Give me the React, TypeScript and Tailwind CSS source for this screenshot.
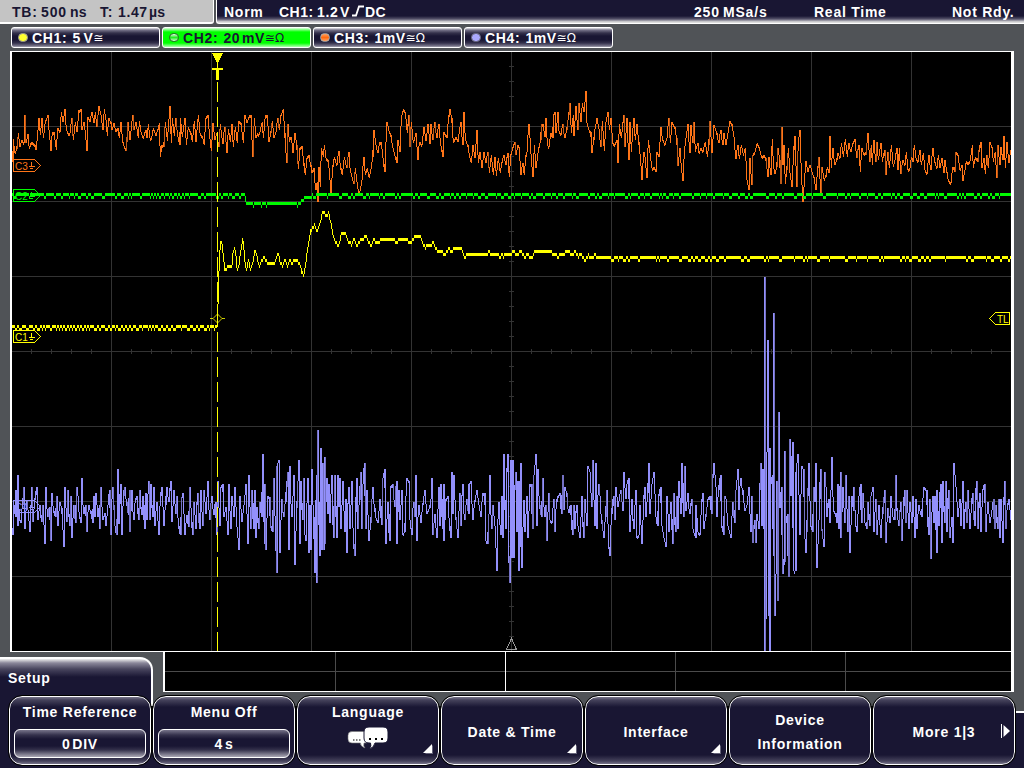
import React from "react";

type Section = { ox: number; oy: number; pts: string };
type Pt = [number, number];

// Trace sections are stored in thirds of a pixel relative to their origin.
const CH3: Section[] = [
  { ox: 0, oy: 90, pts: "38,215 40,148 44,190 50,178 55,130 60,170 66,150 72,160 74,75 78,160 84,132 88,178 94,155 104,165 108,180 112,145 117,85 121,135 126,84 130,145 136,95 144,75 147,120 153,182 157,125 162,125 169,180 173,115 180,125 184,66 189,95 195,58 199,120 205,130 210,128 215,84 220,150 226,95 231,125 237,60 243,58 246,120 252,95 256,130 261,182 264,80 270,95 275,66 282,100 286,66 290,110 297,48 303,75 309,120 313,58 318,90 322,137 326,85 332,95 336,120 342,100 347,125 354,113 358,145 363,95 368,155 377,182 380,155 384,95 390,150 398,75 402,120 408,95 415,145 418,93 424,132 430,145 437,120 441,145 445,103 450,145 454,150 460,113 468,138 473,120 478,100 481,200 486,165 491,170 496,95 502,152 510,48 514,160 517,84 523,138 527,84 532,130 539,165 541,84 547,140 555,85 559,165 565,110 572,130 577,155 583,93 588,155 595,75 600,130 607,140 613,165 617,84 624,76 628,130 634,182 639,100 645,150 650,130 656,170 661,103 668,162 674,110 681,190 685,118 691,155 696,103 700,172 706,110 712,160 716,93 723,100 730,160 735,76 741,100 749,75" },
  { ox: 250, oy: 90, pts: "3,75 8,200 13,85 18,145 22,130 28,135 33,110 37,95 40,145 46,76 52,75 57,155 62,130 67,93 72,145 78,125 83,84 88,120 93,76 100,58 104,130 110,218 114,103 118,155 124,140 129,190 135,130 140,165 145,236 150,175 156,167 161,220 166,255 171,205 176,195 182,225 186,250 191,235 197,300 202,275 204,335 207,230 211,290 214,175 220,200 223,165 228,205 235,210 240,270 243,312 248,230 253,200 260,225 266,184 272,235 277,255 283,200 290,235 296,185 300,235 306,260 311,283 316,235 321,275 326,310 331,300 336,270 341,200 346,255 352,235 358,265 364,230 368,200 372,121 378,165 383,190 389,155 394,158 400,215 404,245 408,155 411,95 417,122 422,135 427,165 433,190 440,218 444,150 450,185 454,84 460,58 466,66 472,130 476,75 479,172 484,95 490,160 498,130 504,210 508,155 516,165 522,112 528,152 534,103 540,163 543,103 548,150 554,95 560,145 566,102 571,155 578,200 582,125 590,145 596,80 600,58 605,84 610,160 618,140 624,155 632,95 638,165 642,66 646,150 653,165 660,205 664,218 669,165 675,205 681,120 685,220 690,185 696,235 702,185 708,220 713,185 718,248 724,195 730,255 735,200 739,258 745,205 751,250 755,218 762,194 767,225 773,190 778,262" },
  { ox: 510, oy: 90, pts: "2,195 8,175 14,155 18,195 24,165 28,172 32,255 38,220 43,255 47,200 51,185 56,103 61,155 64,210 69,262 73,165 78,235 82,205 86,175 92,150 94,103 100,103 104,140 108,84 112,165 117,172 122,130 128,145 130,75 135,66 138,130 144,66 147,122 152,135 158,103 164,145 170,120 176,75 180,40 184,128 190,75 192,138 198,48 203,120 207,40 213,95 217,40 222,66 228,3 231,100 236,120 242,125 246,190 251,150 255,118 261,85 267,118 272,172 277,93 283,182 288,95 294,66 298,120 303,85 308,160 314,165 321,150 324,218 328,103 334,145 341,76 345,170 351,85 356,210 360,95 364,185 371,84 376,150 381,103 386,155 391,200 396,270 401,185 406,205 410,263 415,150 420,190 426,235 432,230 438,245 441,185 448,200 452,112 458,150 464,165 471,145 476,84 481,160 486,95 494,112 500,145 504,228 510,175 514,235 519,272 523,185 529,135 534,103 539,190 543,105 548,160 552,95 556,185 563,160 567,190 573,175 579,185 586,155 592,200 596,165 600,94 606,190 612,104 620,130 626,160 632,120 638,165 642,130 648,165 654,130 660,94 666,103 672,140 677,208 683,165 688,208 694,165 700,195 706,175 711,270 717,300 720,205 725,285 729,195 735,185 742,158 748,175 755,205 761,195" },
  { ox: 764, oy: 90, pts: "0,195 5,205 12,262 15,200 20,255 25,148 28,225 33,252 38,230 42,175 47,210 50,282 54,112 57,225 60,165 64,282 68,240 73,175 78,250 84,290 89,180 93,138 98,290 103,155 108,121 112,250 117,335 121,275 126,212 131,245 138,225 144,245 150,262 156,300 161,235 165,202 170,308 174,230 180,268 185,262 190,230 195,250 198,138 202,235 206,175 212,225 218,210 222,190 228,205 232,158 238,200 244,148 250,200 254,158 260,185 267,160 273,148 278,205 284,165 289,245 293,175 299,190 305,195 312,130 317,215 322,165 325,225 329,150 335,215 338,155 343,210 351,158 355,215 362,180 366,255 371,185 376,235 382,165 388,232 393,210 398,175 402,240 406,175 410,252 416,210 423,225 427,185 432,240 438,235 442,200 446,215 451,165 456,205 462,215 467,180 472,225 478,190 483,240 489,252 494,195 500,240 506,175 512,215 518,235 523,195 528,235 534,205 540,250 543,210 548,245 553,272 561,280 566,230 572,245 576,185 582,195 588,240 594,225 597,272 603,240 607,212 613,220 619,210 625,165 628,235 634,200 641,215 644,185 650,155 654,235 660,205 664,252 668,195 673,235 678,156 684,172 688,215 694,185 698,263 702,165 707,225 711,170 716,210 720,138 724,235 729,155 734,218 741,180" },
];

const CH4: Section[] = [
  { ox: 0, oy: 420, pts: "38,345 42,255 46,290 48,210 52,318 54,165 58,300 63,308 67,255 72,201 75,326 80,240 84,270 90,335 95,201 99,305 104,240 110,201 114,300 119,255 124,305 129,255 135,372 138,201 142,290 148,260 153,362 156,219 160,272 166,290 171,228 174,318 179,245 185,265 192,380 195,201 200,305 204,210 208,318 213,228 216,353 221,255 226,308 230,201 234,228 238,290 243,308 246,174 250,282 256,255 261,335 265,255 271,272 278,308 280,228 285,290 288,219 294,290 298,255 300,326 303,201 308,300 314,280 318,318 324,255 328,210 333,345 337,201 341,255 346,335 350,345 354,147 357,312 361,192 366,345 370,228 373,201 379,245 385,285 388,210 390,335 396,210 400,300 406,240 411,228 415,300 420,210 424,285 429,228 433,326 436,219 440,300 446,182 449,300 453,192 457,290 462,201 465,318 470,245 477,345 481,228 486,201 492,318 496,255 500,201 506,245 512,182 516,305 522,210 527,282 531,228 535,318 541,345 545,235 549,219 555,345 560,285 565,320 570,201 577,345 582,245 588,326 592,219 598,326 603,210 608,318 612,210 618,282 624,182 628,300 635,228 641,285 646,245 650,345 654,182 659,318 663,201 668,192 672,290 678,260 684,345 687,192 692,326 696,228 702,290 705,201 711,320 717,390 720,228 726,305 732,255 738,192 744,372 747,165" },
  { ox: 250, oy: 420, pts: "2,326 6,210 10,326 13,210 18,353 21,262 25,326 30,245 34,290 39,102 43,372 45,192 48,390 53,228 58,230 61,318 67,335 72,175 76,326 80,460 81,138 87,120 90,398 95,237 100,290 106,245 109,201 114,156 117,390 120,138 124,290 129,228 132,165 135,435 140,265 147,121 150,372 153,183 157,300 162,174 165,345 168,362 173,174 176,398 180,255 183,390 186,147 190,290 195,460 199,165 201,488 204,30 208,408 212,84 214,390 217,130 220,390 224,112 225,372 229,174 232,282 237,192 240,308 245,165 250,353 254,165 260,353 262,165 267,262 270,174 273,326 279,183 284,335 288,237 291,398 295,201 300,326 306,183 310,372 315,408 319,174 322,326 328,240 332,156 334,326 339,192 343,130 347,326 351,210 357,362 362,310 368,201 373,265 379,300 384,308 390,237 394,315 399,174 404,147 408,372 413,245 418,362 422,201 428,192 434,262 439,183 441,372 446,210 450,300 456,210 459,345 464,335 468,228 471,174 477,183 480,300 485,345 490,245 495,290 498,165 500,362 506,255 513,308 518,255 525,210 530,282 538,265 543,237 546,174 548,345 555,282 560,353 567,201 570,318 573,192 577,326 580,192 582,362 588,237 594,228 598,318 603,353 606,156 609,282 612,165 617,290 624,353 629,219 633,318 637,192 643,300 650,237 655,282 657,192 663,183 668,300 674,245 681,210 687,255 693,290 698,219 704,219 708,362 712,372 717,282 720,165 724,326 729,255 735,318 741,452 745,245" },
  { ox: 500, oy: 420, pts: "2,345 6,228 9,353 12,102 16,326 20,156 24,102 26,408 30,488 32,120 36,415 38,120 41,415 44,210 48,156 51,335 54,183 57,452 60,183 61,380 63,130 66,443 71,240 75,335 81,228 84,353 90,192 94,192 97,326 102,165 108,102 110,318 114,147 118,255 124,290 129,174 133,290 137,255 141,362 146,219 150,300 156,308 161,237 165,335 169,245 174,228 180,219 184,282 188,165 190,270 194,201 200,219 205,280 211,255 217,345 221,255 225,326 229,255 234,318 240,353 246,228 250,353 255,237 261,318 264,138 270,156 275,262 279,120 284,318 288,130 291,326 295,192 300,228 304,300 312,353 316,290 321,210 326,380 330,408 334,282 340,228 345,300 348,201 354,262 362,210 369,272 372,156 377,237 381,192 385,174 390,335 396,237 400,326 408,210 410,353 417,345 420,255 426,372 433,201 438,290 443,219 446,130 450,282 456,192 462,156 468,290 472,318 476,228 481,201 486,318 492,353 498,380 501,228 507,335 512,245 518,372 520,219 526,335 531,228 534,326 537,183 543,282 546,130 550,290 553,138 558,272 564,219 568,282 575,237 579,326 586,353 588,255 594,335 600,345 605,245 609,219 612,326 617,290 624,237 629,228 634,282 638,174 642,130 648,201 651,290 655,210 661,165 665,318 671,345 673,228 678,237 684,318 693,353 698,245 703,308 708,210 714,147 717,270 721,174 727,210 735,272 741,255 747,201" },
  { ox: 750, oy: 260, pts: "2,815 5,708 8,850 13,780 18,850 21,762 27,806 29,690 33,610 36,797 39,627 42,806 44,51 45,1173 48,600 48,1077 53,240 57,1067 58,564 60,1173 63,672 67,645 70,887 72,160 75,1067 78,942 80,663 82,1022 85,672 87,457 90,743 94,681 97,898 99,942 103,905 105,573 108,790 112,762 115,950 120,537 123,708 127,546 130,933 136,933 138,636 144,582 150,825 155,618 160,628 166,879 170,815 173,708 177,610 182,797 187,815 192,681 195,726 198,610 201,923 207,780 211,627 215,806 222,860 224,636 228,681 231,770 235,717 240,788 246,591 250,752 256,760 261,790 264,672 267,806 271,636 273,833 279,681 284,788 288,645 293,815 297,708 300,879 306,708 310,752 312,681 317,797 321,815 327,708 331,672 334,788 339,699 345,788 350,806 354,726 358,797 363,708 369,681 372,815 377,717 381,825 387,735 392,833 397,762 404,690 408,850 413,744 419,788 423,708 428,770 434,780 438,645 440,744 446,797 452,726 456,842 463,690 467,788 471,690 476,806 480,726 486,788 489,708 495,833 497,717 501,806 506,735 514,770 522,681 529,690 535,825 539,717 543,896 547,708 552,788 555,708 560,879 561,690 566,797 571,672 576,850 579,663 583,788 588,663 590,815 595,690 600,833 606,771 608,850 612,610 618,681 624,770 630,717 633,797 639,663 642,806 646,726 650,788 654,690 660,806 667,699 673,797 679,663 684,806 688,699 693,815 698,690 703,672 708,815 713,726 720,790 727,743 730,717 733,806 738,735 742,806 747,717 750,833 753,717 759,850 763,663 767,806 772,735 777,717 783,780" },
];

const CH1: Section[] = [
  { ox: 0, oy: 90, pts: "651,718 654,570 656,535 660,460 664,458 668,490 674,538 680,535 684,528 694,530 698,490 705,473 710,538 714,538 718,505 727,449 731,480 735,530 740,535 745,512 752,538 757,520 762,490 768,484" },
  { ox: 250, oy: 90, pts: "0,520 6,540 10,500 17,484 22,505 28,530 34,515 43,502 52,520 72,520 78,505 84,492 90,515 98,530 105,512 112,529 118,512 125,518 135,510 150,520 153,540 161,557 165,530 170,490 176,455 180,425 190,410 195,403 200,423 206,412 211,400 215,368 222,368 228,376 236,370 242,400 248,430 255,455 266,467 272,435 280,430 286,430 293,450 305,465 310,447 322,467 330,452 348,439 355,455 363,467 370,450 384,457 395,448 410,447 430,449 438,457 450,447 470,452 485,457 495,439 512,439 518,455 525,475 530,467 545,467 550,456 562,484 575,484 584,494 595,476 605,484 612,475 634,476 645,503 650,494 712,494 717,484 724,494 740,490 750,503 755,490 760,503 768,490 778,494" },
  { ox: 510, oy: 90, pts: "2,494 12,484 20,494 35,485 45,503 52,494 65,503 75,484 95,484 115,480 125,484 130,494 145,500 155,494 175,484 185,494 195,487 205,500 212,493 225,512 235,496 245,503 255,494 262,502" },
];

function decode(sections: Section[]): Pt[] {
  return sections.flatMap((s) =>
    s.pts.split(" ").map((p): Pt => {
      const [x, y] = p.split(",").map(Number);
      return [s.ox + x / 3, s.oy + y / 3];
    }),
  );
}

function at(pts: Pt[], x: number): number {
  let i = 1;
  while (i < pts.length - 1 && pts[i][0] < x) i++;
  const [x0, y0] = pts[i - 1];
  const [x1, y1] = pts[i];
  const t = x1 === x0 ? 0 : Math.max(0, Math.min(1, (x - x0) / (x1 - x0)));
  return y0 + (y1 - y0) * t;
}

function hash(n: number): number {
  const v = Math.sin(n * 12.9898) * 43758.5453;
  return v - Math.floor(v);
}

// Peak-detect rendering: one vertical bar for every screen column,
// with each peak held slightly into the following column.
function noisePaths(sections: Section[], hold: number): [string, string] {
  const pts = decode(sections);
  let bright = "";
  let dim = "";
  for (let x = 12; x < 1011; x++) {
    const ys = [at(pts, x), at(pts, x + 1)];
    let held = false;
    for (const p of pts) {
      if (p[0] >= x - hold && p[0] <= x + 1) {
        ys.push(p[1]);
        if (p[0] < x) held = true;
      }
    }
    const top = Math.round(Math.min(...ys));
    const h = Math.max(3, Math.round(Math.max(...ys)) - top);
    const bar = `M${x} ${top}h1v${h}h-1z`;
    if (h > 8 && held && hash(x) < 0.5) dim += bar;
    else bright += bar;
  }
  return [bright, dim];
}

function levelPath(from: number, to: number, level: (x: number) => number): string {
  let d = "";
  let prev = level(from);
  for (let x = from; x < to; x++) {
    const y = level(x);
    const top = Math.min(y, prev + (y > prev ? 3 : 0));
    const bottom = Math.max(y + 3, y < prev ? prev : y + 3);
    d += `M${x} ${top}h1v${bottom - top}h-1z`;
    prev = y;
  }
  return d;
}

function jitter(base: number, from: number, to: number, seed: number, share: number): number[] {
  const out: number[] = [];
  let x = from;
  let n = seed;
  while (x < to) {
    const high = 2 + Math.floor(hash(n++) * hash(n++) * share);
    const low = 1 + Math.floor(hash(n++) * 2.7);
    for (let k = 0; k < high; k++) out.push(base);
    for (let k = 0; k < low; k++) out.push(base + 3);
    x += high + low;
  }
  return out;
}

const [ch3, ch3Dim] = noisePaths(CH3, 0.5);
const [ch4, ch4Dim] = noisePaths(CH4, 0.7);

const greenNoise = jitter(193, 12, 1012, 7, 15);
const ch2 = levelPath(12, 1011, (x) => {
  if (x >= 246 && x < 301) return hash(x) < 0.07 ? 205 : 202;
  if (x === 245) return 199;
  if (x >= 301 && x < 304) return 199;
  if (x >= 304 && x < 312) return 196;
  return greenNoise[x - 12];
});

const yellowLow = jitter(325, 12, 218, 31, 5);
const yellowTail = jitter(256, 597, 1012, 93, 22);
const ch1Pts = decode(CH1);
const ch1 =
  levelPath(12, 217, (x) => yellowLow[x - 12]) +
  levelPath(217, 597, (x) => Math.round((at(ch1Pts, x + 0.5) - 2.5) / 3) * 3 + 1) +
  levelPath(597, 1011, (x) => yellowTail[x - 597]);

const V = [111, 211, 311, 411, 511, 611, 711, 811, 911];
const H = [126, 201, 276, 351, 426, 501, 576];
const ticksX = Array.from({ length: 49 }, (_, i) => 31 + i * 20);
const ticksY = Array.from({ length: 39 }, (_, i) => 66 + i * 15);

function Marker({ y, color, label }: { y: number; color: string; label: string }) {
  return (
    <g stroke={color} fill="none">
      <path d={`M13.5 ${y - 5.5}h21l6 6l-6 6h-21z`} />
      <text x="15" y={y + 4.5} fill={color} stroke="none" fontSize="10" className="font-normal tracking-normal">
        {label}
      </text>
      <path d={`M31.5 ${y - 3}v5M28.5 ${y + 1.5}h6M30 ${y + 3.5}h3`} />
    </g>
  );
}

function Scope() {
  return (
    <svg className="block h-[601px] w-[1004px]" viewBox="10 51 1004 601" shapeRendering="crispEdges">
      <rect x="10" y="51" width="1004" height="601" fill="#fff" />
      <rect x="12" y="52" width="999" height="599" fill="#000" />
      <g stroke="#333">
        {V.map((x) => <path key={x} d={`M${x + 0.5} 52V651`} />)}
        {H.map((y) => <path key={y} d={`M12 ${y + 0.5}H1011`} />)}
        {ticksX.map((x) => <path key={x} d={`M${x + 0.5} 349v5`} />)}
        {ticksY.map((y) => <path key={y} d={`M509 ${y + 0.5}h5`} />)}
      </g>
      <path d="M511.5 638.5l-5 11h10z" fill="none" stroke="#999" />
      <path d={ch4} fill="#9390fb" />
      <path d={ch4Dim} fill="#7471c4" />
      <Marker y={506} color="#9390fb" label="C4" />
      <path d={ch3} fill="#ff7518" />
      <path d={ch3Dim} fill="#c05a18" />
      <path d={ch2} fill="#00fa00" />
      <Marker y={165} color="#ff7518" label="C3" />
      <Marker y={195} color="#00fa00" label="C2" />
      <path d={ch1} fill="#ffff00" />
      <Marker y={336} color="#ffff00" label="C1" />
      <path d="M217.5 82V651" stroke="#ffff00" strokeDasharray="20 5" />
      <path d="M212 53h11l-5 10v5h5v2h-4v10h-3v-10h-4v-2h5v-5z" fill="#ffff00" />
      <path d="M210 318.5h3M222 318.5h3M213 318.5l4.5 -4.5l4.5 4.5l-4.5 4.5z" fill="none" stroke="#ffff00" strokeWidth="0.8" shapeRendering="auto" />
      <g stroke="#ffff00" fill="none">
        <path d="M1009.5 312.5h-14l-6 6l6 6h14z" />
        <text x="997" y="322.5" fill="#ffff00" stroke="none" fontSize="10" className="font-normal tracking-normal">TL</text>
      </g>
    </svg>
  );
}

const panel = "bg-[linear-gradient(to_bottom,#e4e3e8_0,#77748a_2px,#34314b_5px,#191633_8px,#191633_12px,#34314b_15px,#77748a_18px,#ddd_20px)]";

function Channel({ name, value, dot, active, ohm = true }: { name: string; value: React.ReactNode; dot: string; active?: boolean; ohm?: boolean }) {
  return (
    <div className={`flex h-[21px] w-[149px] items-center rounded-[3px] border border-white pl-[6px] ${active ? "bg-[linear-gradient(to_bottom,#dfd_0,#0f0_4px,#0f0_15px,#dfd_20px)] text-[#191633]" : `${panel} text-white`}`}>
      <span className={`mr-[4px] h-[9px] w-[10px] rounded-full border ${dot}`} />
      <span className="mr-[5px] tracking-[0.7px]">{name}</span>
      <span className="flex tracking-[0.5px]">{value}</span>
      <span className="font-[DejaVu_Sans,sans-serif] text-[12px] font-normal tracking-normal">≅{ohm ? "Ω" : ""}</span>
    </div>
  );
}

function SoftKey({ children, corner, more }: { children: React.ReactNode; corner?: boolean; more?: boolean }) {
  return (
    <div className="relative flex h-[69px] w-[142px] flex-col items-center rounded-[13px] border border-white bg-[linear-gradient(to_bottom,#77748a_0,#45425b_3px,#191633_10px,#191633_58px,#45425b_64px,#88859a_68px)] text-white outline outline-black">
      {children}
      {corner && (
        <svg className="absolute right-[4px] bottom-[10px] h-[10px] w-[11px]" viewBox="0 0 11 10">
          <path d="M2 10H10V1" fill="#66647a" />
          <path d="M0 9H9V0z" fill="#fff" />
        </svg>
      )}
      {more && (
        <svg className="absolute top-[26px] right-[4px] h-[16px] w-[10px]" viewBox="0 0 10 16">
          <path d="M1.5 1v14" stroke="#fff" />
          <path d="M3.5 2L10 8L3.5 14z" fill="#fff" />
        </svg>
      )}
    </div>
  );
}

function Value({ children }: { children: React.ReactNode }) {
  return (
    <div className="mt-[9px] flex h-[29px] w-[132px] items-center justify-center rounded-[6px] border border-white bg-[linear-gradient(to_bottom,#77748a_0,#34314b_5px,#191633_9px,#191633_16px,#34314b_20px,#aaa8b5_27px)]">
      {children}
    </div>
  );
}

export default function App() {
  return (
    <div className="flex h-[768px] w-[1024px] flex-col overflow-hidden bg-[#505357] font-['Liberation_Sans',sans-serif] text-[14px] leading-[16px] font-bold tracking-[0.75px] whitespace-nowrap">
      <header className="flex h-[24px] gap-[2px]">
        <div className="flex w-[214px] rounded-br-[3px] border-r border-b-2 border-white bg-[#c4c4c4] pt-[4px] pl-[12px] text-[#191633]">
          <span className="w-[29px]">TB:</span>
          <span className="w-[29px] tracking-[0.9px]">500</span>
          <span className="w-[30px] tracking-[0.3px]">ns</span>
          <span className="w-[18px]">T:</span>
          <span className="w-[31px] tracking-[0.6px]">1.47</span>
          <span className="tracking-[0.3px]">µs</span>
        </div>
        <div className="flex grow rounded-bl-[3px] border-b border-l border-white bg-[linear-gradient(to_bottom,#191633_0,#191633_16px,#55526a_19px,#ddd_22px)] pt-[4px] pl-[7px] text-white">
          <span className="w-[55px]">Norm</span>
          <span className="w-[38px] tracking-[0.5px]">CH1:</span>
          <span className="w-[23px] tracking-[0.6px]">1.2</span>
          <span className="w-[11px]">V</span>
          <svg className="mt-[1px] h-[12px] w-[14px]" viewBox="0 0 14 12">
            <path d="M1 10.5h4L8 1.500h5" fill="none" stroke="#fff" strokeWidth="1.8" />
          </svg>
          <span className="w-[329px] tracking-[0.4px]">DC</span>
          <span className="w-[29px] tracking-[0.8px]">250</span>
          <span className="w-[91px] tracking-[0.8px]">MSa/s</span>
          <span className="w-[138px]">Real Time</span>
          <span>Not Rdy.</span>
        </div>
      </header>
      <div className="flex h-[27px] gap-[2px] pt-[3px] pl-[11px]">
        <Channel name="CH1:" ohm={false} value={<><span className="w-[11px]">5</span><span>V</span></>} dot="border-[#999] bg-[#ffff30]" />
        <Channel name="CH2:" active value={<><span className="mr-[2px]">20</span><span>mV</span></>} dot="border-[#286428] bg-[linear-gradient(#dfd,#2e2,#cfc)]" />
        <Channel name="CH3:" value="1mV" dot="border-[#aaa] bg-[linear-gradient(#ffa060,#ff6a10,#ffa060)]" />
        <Channel name="CH4:" value="1mV" dot="border-[#667] bg-[#aaa8ff]" />
      </div>
      <main className="pl-[10px]">
        <Scope />
      </main>
      <div className="flex h-[40px] items-end">
        <div className="flex h-[35px] w-[153px] rounded-tr-[13px] border-t-2 border-r-2 border-white bg-[linear-gradient(to_bottom,#eee_0,#8a879a_4px,#48455e_10px,#191633_18px)] pt-[11px] pl-[8px] text-white">Setup</div>
        <svg className="ml-[10px] h-[40px] w-[851px]" viewBox="163 652 851 40" shapeRendering="crispEdges">
          <rect x="163" y="652" width="851" height="40" fill="#fff" />
          <rect x="165" y="652" width="846" height="39" fill="#000" />
          <path d="M335.5 652v39M675.5 652v39M845.5 652v39M165 671.5h846" stroke="#4b4b4b" />
          <path d="M505.5 652v39" stroke="#fff" />
        </svg>
      </div>
      <div className="flex h-[76px] bg-[linear-gradient(to_bottom,#505357_0,#505357_19px,#fff_19px,#fff_21px,#191633_21px)]">
        <div className="h-[76px] w-[9px] bg-[#191633]" />
        <div className="flex h-[76px] gap-[2px] bg-[linear-gradient(to_bottom,transparent_14px,#000_14px,#000_60px,#191633_60px),linear-gradient(to_right,#191633_0,#191633_142px,#fff_142px,#fff_144px,transparent_144px)] pt-[4px]">
          <SoftKey>
            <span className="mt-[7px]">Time Reference</span>
            <Value><span className="tracking-[0.5px]">0</span><span className="ml-[2px]">DIV</span></Value>
          </SoftKey>
          <SoftKey>
            <span className="mt-[7px]">Menu Off</span>
            <Value><span>4</span><span className="ml-[2px]">s</span></Value>
          </SoftKey>
          <SoftKey corner>
            <span className="mt-[7px]">Language</span>
            <svg className="mt-[6px] h-[24px] w-[42px]" viewBox="0 0 42 24">
              <path d="M5 5.5H20V17H17q-1 3 1 5q-5-2-4.500-5H5q-4 0-4-4V9.500q0-4 4-4z" fill="#fff" stroke="#777" strokeWidth=".6" />
              <path d="M22 1H36q5 0 5 5V12q0 5-5 5H28q-1 5-6 6q3-3 1.500-6H22q-5 0-5-5V6q0-5 5-5z" fill="#fff" stroke="#191633" strokeWidth="1" />
              <path d="M6 14h1.500M9 14h1.500M12 14h1.500" stroke="#555" strokeWidth="1.500" />
              <path d="M22 13h2M28 13h2M34 13h2" stroke="#000" strokeWidth="2" />
            </svg>
          </SoftKey>
          <SoftKey corner><span className="mt-[27px]">Date &amp; Time</span></SoftKey>
          <SoftKey corner><span className="mt-[27px]">Interface</span></SoftKey>
          <SoftKey><span className="mt-[15px]">Device</span><span className="mt-[8px]">Information</span></SoftKey>
          <SoftKey more><span className="mt-[27px]">More 1|3</span></SoftKey>
        </div>
      </div>
    </div>
  );
}
